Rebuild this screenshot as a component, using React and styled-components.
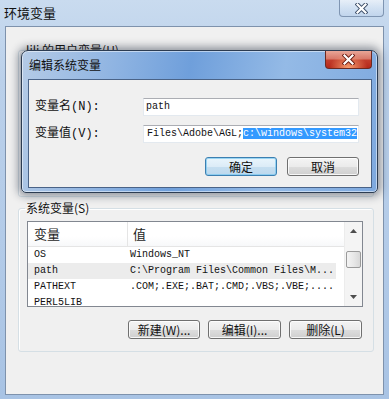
import React from "react";
import styled, { createGlobalStyle } from "styled-components";

const CJK = `"Noto Sans CJK SC", "Liberation Sans", sans-serif`;
const MONO = `"Liberation Mono", "Noto Sans CJK SC", monospace`;

const GlobalStyle = createGlobalStyle`
  html, body {
    margin: 0;
    padding: 0;
  }
  body {
    background: #8fb1d8;
    font-family: ${CJK};
  }
`;

const systemVars = [
  { name: "OS", value: "Windows_NT" },
  { name: "path", value: "C:\\Program Files\\Common Files\\M...", selected: true },
  { name: "PATHEXT", value: ".COM;.EXE;.BAT;.CMD;.VBS;.VBE;...." },
  { name: "PERL5LIB", value: "" },
];

const CloseGlyph = ({ light }) => (
  <svg width="13" height="11" viewBox="0 0 13 11">
    <path d="M2.5 1.5 L10.5 9.5 M10.5 1.5 L2.5 9.5" stroke={light ? "#3b4c66" : "#6a1a10"} strokeWidth="4" strokeLinecap="square" />
    <path d="M2.5 1.5 L10.5 9.5 M10.5 1.5 L2.5 9.5" stroke="#ffffff" strokeWidth="2.2" strokeLinecap="square" />
  </svg>
);

const Arrow = ({ down }) => (
  <svg width="7" height="4" viewBox="0 0 7 4">
    <polygon points={down ? "0,0 7,0 3.5,4" : "0,4 7,4 3.5,0"} fill="#4d4d4d" />
  </svg>
);

const App = () => {
  return (
    <Desktop>
      <GlobalStyle />
      <Window>
        <TitleBar>
          <Title>环境变量</Title>
          <OuterClose>
            <CloseGlyph light />
          </OuterClose>
        </TitleBar>
        <Client>
          <Group $top={15} $height={155}>
            <Legend>lili 的用户变量(U)</Legend>
          </Group>
          <Group $top={3}>
            <Legend>系统变量(S)</Legend>
            <ListView>
              <ListBody>
                <Header>
                  <HeadCell>变量</HeadCell>
                  <HeadCell $divider>值</HeadCell>
                </Header>
                {systemVars.map((row) => (
                  <Row key={row.name} $selected={row.selected}>
                    <NameCell>{row.name}</NameCell>
                    <ValueCell>{row.value}</ValueCell>
                  </Row>
                ))}
              </ListBody>
              <ScrollBar>
                <ArrowButton>
                  <Arrow />
                </ArrowButton>
                <Thumb />
                <Spacer />
                <ArrowButton $bottom>
                  <Arrow down />
                </ArrowButton>
              </ScrollBar>
            </ListView>
            <ButtonRow>
              <Button $width={72}>新建(W)...</Button>
              <Button $width={73}>编辑(I)...</Button>
              <Button $width={73}>删除(L)</Button>
            </ButtonRow>
          </Group>
        </Client>
      </Window>

      <Dialog>
        <DialogTitleBar>
          <DialogTitle>编辑系统变量</DialogTitle>
          <RedClose>
            <CloseGlyph />
          </RedClose>
        </DialogTitleBar>
        <DialogClient>
          <Form>
            <FieldLabel>变量名(N):</FieldLabel>
            <TextBox>path</TextBox>
            <FieldLabel>变量值(V):</FieldLabel>
            <TextBox $shift>
              Files\Adobe\AGL;<Selected>c:\windows\system32</Selected>
            </TextBox>
          </Form>
          <DialogButtons>
            <Button $width={72} $default>
              确定
            </Button>
            <Button $width={72}>取消</Button>
          </DialogButtons>
        </DialogClient>
      </Dialog>
    </Desktop>
  );
};

export default App;

const Desktop = styled.div`
  position: relative;
  width: 389px;
  height: 399px;
  overflow: hidden;
`;

const Window = styled.div`
  box-sizing: border-box;
  width: 100%;
  height: 100%;
  display: flex;
  flex-direction: column;
  padding: 0 5px 4px 5px;
  background: linear-gradient(
    180deg,
    #c9dbef 0%,
    #bad0ea 20%,
    #b3cbe8 60%,
    #a8c3e4 100%
  );
`;

const TitleBar = styled.div`
  height: 26px;
  display: flex;
  justify-content: space-between;
  align-items: flex-start;
`;

const Title = styled.div`
  padding: 4px 0 0 0;
  margin-left: -1px;
  font-size: 13px;
  line-height: 17px;
  color: #111;
`;

const OuterClose = styled.div`
  box-sizing: border-box;
  width: 45px;
  height: 17px;
  display: flex;
  align-items: center;
  justify-content: center;
  border: 1px solid #7f95b2;
  border-top: none;
  border-radius: 0 0 4px 4px;
  background: linear-gradient(
    180deg,
    rgba(255, 255, 255, 0.55) 0%,
    rgba(220, 232, 246, 0.5) 50%,
    rgba(190, 210, 235, 0.6) 100%
  );
`;

const Client = styled.div`
  flex: 1;
  display: flex;
  flex-direction: column;
  border: 1px solid #7e92ac;
  background: #f0f0f0;
  padding: 0 9px 0 12px;
`;

const Group = styled.fieldset`
  box-sizing: border-box;
  min-width: 0;
  margin: ${(p) => p.$top}px 0 0 0;
  padding: 5px 10px 12px 8px;
  height: ${(p) => (p.$height ? `${p.$height}px` : "auto")};
  border: 1px solid #d5dfe5;
  border-radius: 3px;
  box-shadow: inset 1px 1px 0 #ffffff;
`;

const Legend = styled.legend`
  padding: 0 1px;
  margin-left: -2px;
  font-size: 12px;
  line-height: 16px;
  color: #111;
`;

const ListView = styled.div`
  box-sizing: border-box;
  height: 86px;
  display: flex;
  border: 1px solid #828790;
  background: #ffffff;
  overflow: hidden;
`;

const ListBody = styled.div`
  flex: 1;
  overflow: hidden;
`;

const Header = styled.div`
  height: 24px;
  display: grid;
  grid-template-columns: 99px 1fr;
  border-bottom: 1px solid #e5e5e5;
  background: linear-gradient(180deg, #ffffff 0%, #ffffff 60%, #f7f8fa 100%);
`;

const HeadCell = styled.div`
  padding-left: ${(p) => (p.$divider ? "5px" : "6px")};
  border-left: ${(p) => (p.$divider ? "1px solid #e5e5e5" : "none")};
  font-size: 13px;
  line-height: 24px;
  color: #1e1e1e;
`;

const Row = styled.div`
  width: 308px;
  height: 16px;
  display: grid;
  grid-template-columns: 100px 208px;
  background: ${(p) => (p.$selected ? "#ececec" : "transparent")};
  font-family: ${MONO};
  font-size: 10px;
  line-height: 16px;
  color: #111;
  white-space: nowrap;
`;

const NameCell = styled.div`
  padding-left: 6px;
  overflow: hidden;
`;

const ValueCell = styled.div`
  padding-left: 2px;
  overflow: hidden;
`;

const ScrollBar = styled.div`
  width: 17px;
  display: flex;
  flex-direction: column;
  background: #f4f4f4;
  border-left: 1px solid #ececec;
`;

const ArrowButton = styled.div`
  height: 17px;
  display: flex;
  align-items: ${(p) => (p.$bottom ? "flex-start" : "center")};
  justify-content: center;
  padding-top: ${(p) => (p.$bottom ? "6px" : "0")};
  box-sizing: border-box;
`;

const Thumb = styled.div`
  margin: 12px 1px 0 1px;
  height: 15px;
  border: 1px solid #9a9a9a;
  border-radius: 2px;
  background: linear-gradient(90deg, #f3f3f3 0%, #e8e8e8 50%, #d8d8d8 100%);
`;

const Spacer = styled.div`
  flex: 1;
`;

const ButtonRow = styled.div`
  display: flex;
  justify-content: flex-end;
  gap: 8px;
  margin-top: 13px;
  padding-right: 1px;
`;

const Button = styled.div`
  box-sizing: border-box;
  width: ${(p) => p.$width}px;
  height: 19px;
  display: flex;
  align-items: center;
  justify-content: center;
  border: 1px solid ${(p) => (p.$default ? "#3c7fb1" : "#707070")};
  border-radius: 3px;
  background: ${(p) =>
    p.$default
      ? "linear-gradient(180deg, #e9f5fc 0%, #dcecf7 50%, #c6dff0 51%, #bcd8ee 100%)"
      : "linear-gradient(180deg, #f4f4f4 0%, #ebebeb 50%, #dddddd 51%, #cfcfcf 100%)"};
  box-shadow: inset 0 0 0 1px
    ${(p) => (p.$default ? "rgba(120, 200, 240, 0.7)" : "rgba(255, 255, 255, 0.8)")};
  font-size: 12px;
  line-height: 17px;
  color: #111;
`;

const Dialog = styled.div`
  position: absolute;
  left: 21px;
  top: 50px;
  box-sizing: border-box;
  width: 357px;
  height: 143px;
  display: flex;
  flex-direction: column;
  border: 1px solid #2c3c52;
  border-radius: 7px 7px 5px 5px;
  background: linear-gradient(
    100deg,
    #b5cbe6 0%,
    #8fb4e2 25%,
    #6f9fdb 45%,
    #94bae6 70%,
    #7ea9df 100%
  );
  box-shadow: 0 0 9px 3px rgba(20, 30, 50, 0.45),
    inset 0 0 0 1px rgba(255, 255, 255, 0.5);
`;

const DialogTitleBar = styled.div`
  height: 28px;
  display: flex;
  justify-content: space-between;
  align-items: flex-start;
  padding-left: 7px;
`;

const DialogTitle = styled.div`
  padding-top: 6px;
  font-size: 12px;
  line-height: 16px;
  color: #111;
`;

const RedClose = styled.div`
  box-sizing: border-box;
  width: 47px;
  height: 18px;
  margin-right: 5px;
  display: flex;
  align-items: center;
  justify-content: center;
  border: 1px solid #6b2a22;
  border-top: none;
  border-radius: 0 0 4px 4px;
  background: radial-gradient(
      ellipse at 50% 100%,
      rgba(255, 170, 120, 0.9) 0%,
      rgba(230, 90, 60, 0) 60%
    ),
    linear-gradient(180deg, #e9a697 0%, #d8796a 45%, #c23d2c 55%, #b5281a 100%);
`;

const DialogClient = styled.div`
  flex: 1;
  margin: 0 5px 4px 6px;
  border: 1px solid #4a6387;
  background: #f0f0f0;
  padding: 18px 11px 0 6px;
`;

const Form = styled.div`
  display: grid;
  grid-template-columns: 108px 216px;
  row-gap: 9px;
  align-items: center;
`;

const FieldLabel = styled.div`
  font-family: ${MONO};
  font-size: 12px;
  line-height: 18px;
  color: #111;
`;

const TextBox = styled.div`
  box-sizing: border-box;
  height: 18px;
  padding-left: ${(p) => (p.$shift ? "3px" : "2px")};
  border: 1px solid #e3e9ef;
  border-top-color: #abadb3;
  background: #ffffff;
  font-family: ${MONO};
  font-size: 10px;
  line-height: 16px;
  color: #111;
  white-space: nowrap;
  overflow: hidden;
`;

const Selected = styled.span`
  background: #3399ff;
  color: #ffffff;
`;

const DialogButtons = styled.div`
  display: flex;
  justify-content: flex-end;
  gap: 10px;
  margin-top: 14px;
  padding-right: 1px;
`;
